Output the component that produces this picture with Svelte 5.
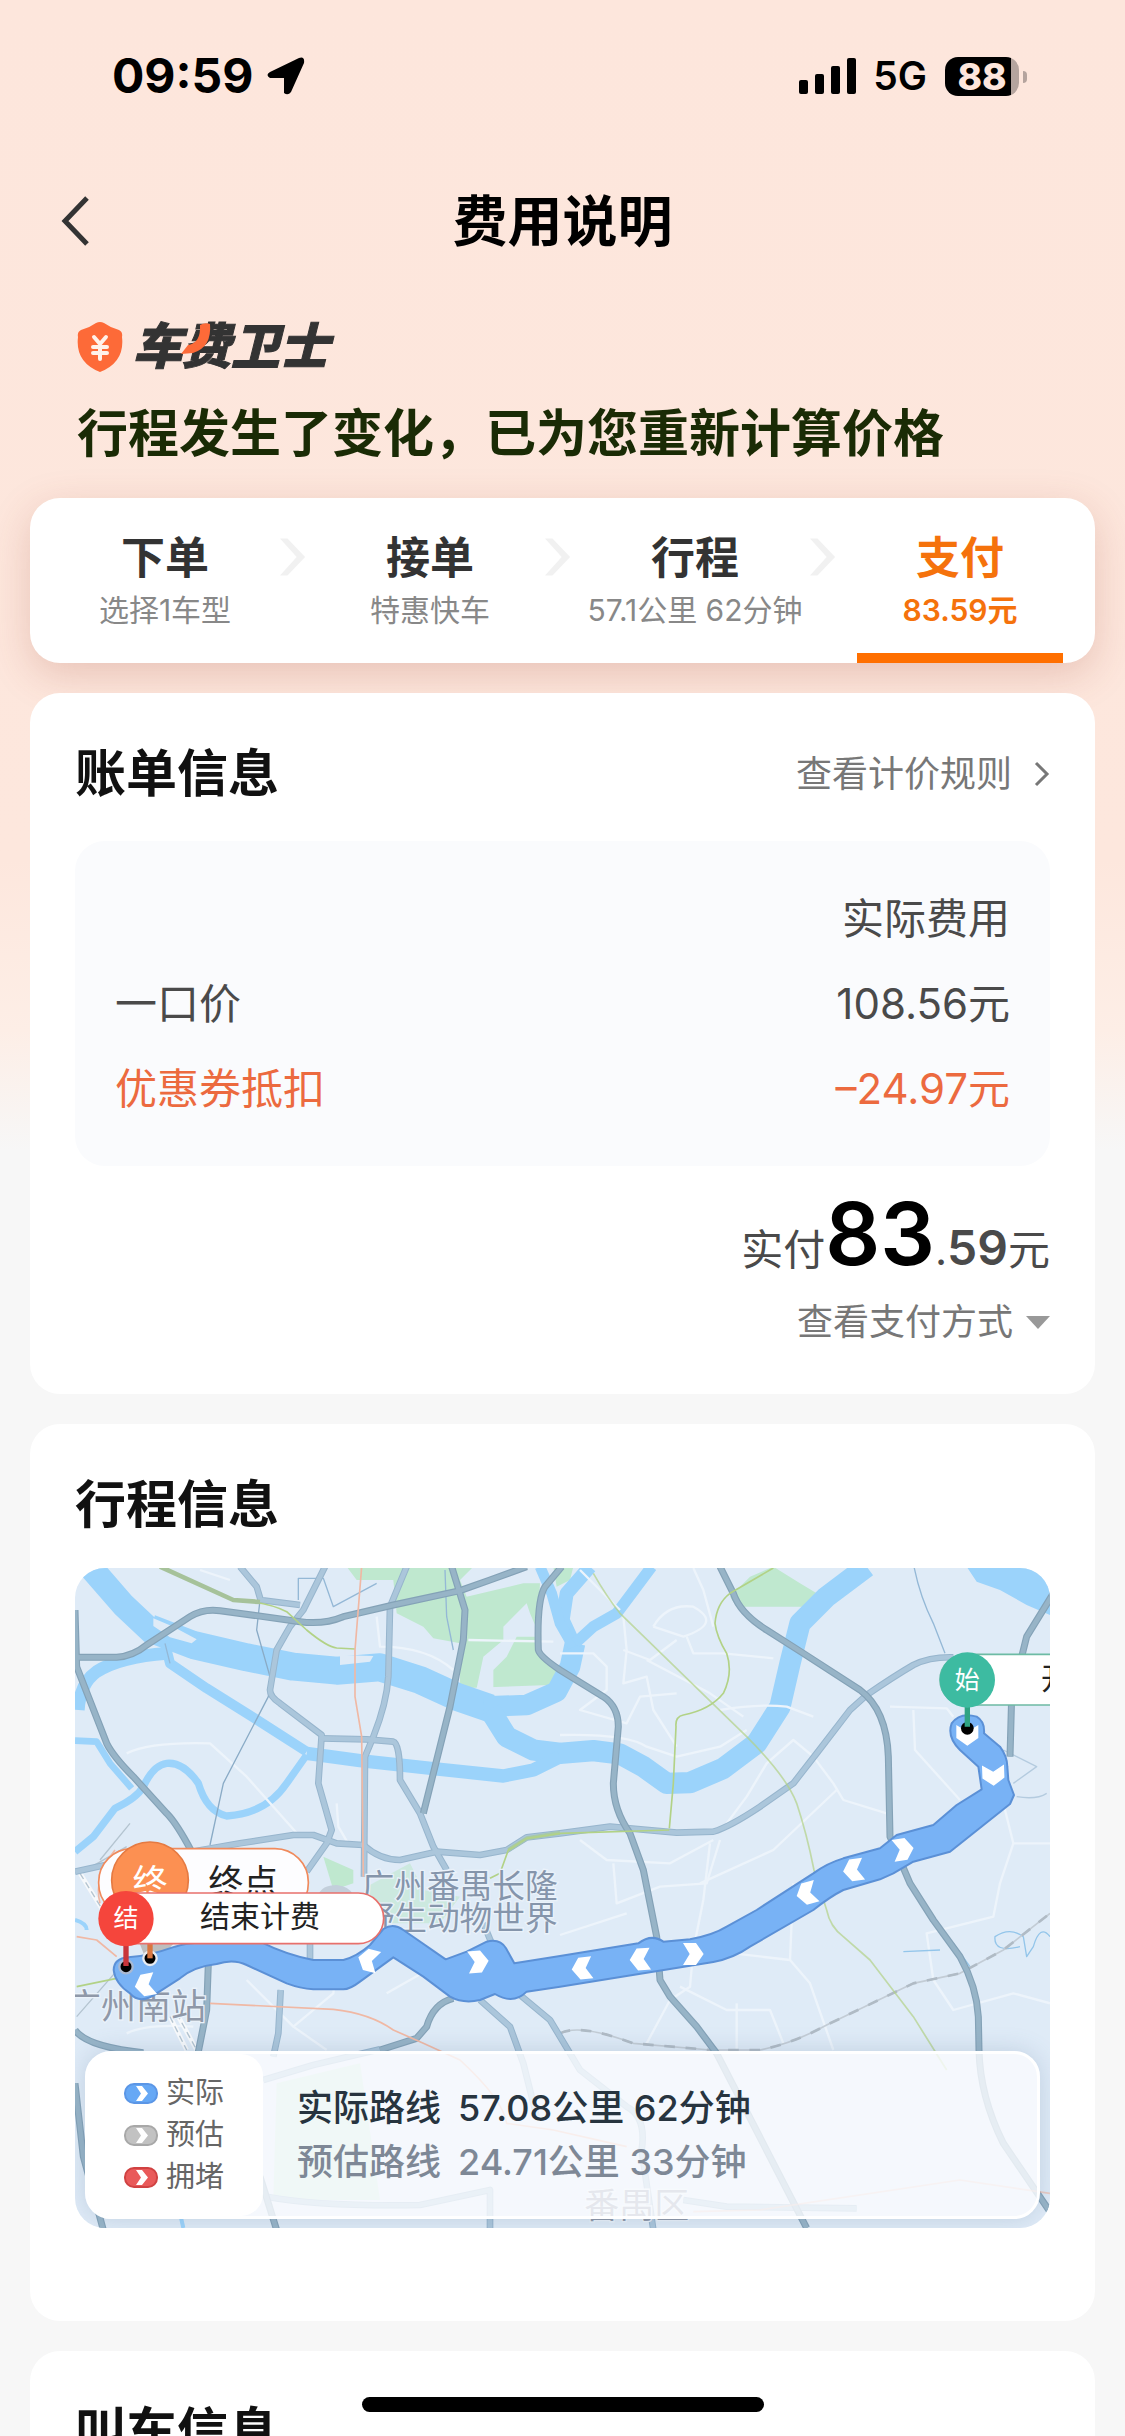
<script>
  const steps = [
    { title: '下单', detail: '选择1车型' },
    { title: '接单', detail: '特惠快车' },
    { title: '行程', detail: '57.1公里 62分钟' },
    { title: '支付', detail: '83.59元', active: true }
  ];

  const bill = [
    { label: '一口价', amount: '108.56元' },
    { label: '优惠券抵扣', amount: '–24.97元', discount: true }
  ];

  const legend = [
    { label: '实际', kind: 'actual' },
    { label: '预估', kind: 'planned' },
    { label: '拥堵', kind: 'jam' }
  ];

  const routes = [
    { name: '实际路线', value: '57.08公里 62分钟', actual: true },
    { name: '预估路线', value: '24.71公里 33分钟' }
  ];

  // Direction marks along the route: x, y, rotation in degrees.
  const marks = [
    [2722, 556, 90], [2800, 676, 88], [2530, 898, -8], [2380, 960, 172], [2240, 1030, 165],
    [1900, 1212, 0], [1740, 1228, 176], [1566, 1255, 174], [1255, 1235, -5], [925, 1230, 195], [255, 1305, 170]
  ];

  const water = [
    ['M90 50L190 165L280 250', 74],
    ['M270 235L400 285L560 322L700 350L830 362L960 352L1080 390L1190 440L1290 475', 84],
    ['M1270 470L1400 465L1490 425L1530 350L1545 280', 62],
    ['M1545 290L1508 210L1520 130L1590 50', 42],
    ['M1440 50L1475 130L1500 220L1540 290', 32],
    ['M1545 280L1600 230L1670 190L1715 130L1775 50', 34],
    ['M1290 480L1340 560L1420 600L1500 610L1600 602L1680 612L1750 650L1820 700L1890 698L1990 655L2090 580L2160 470L2190 340L2220 220L2300 140L2420 50', 64],
    ['M310 260L330 340L440 415L600 515L740 605', 30],
    ['M740 610L900 632L1120 656L1330 678L1420 660L1500 620', 40],
    ['M55 480Q60 400 110 365Q180 320 320 310', 38],
    ['M740 615L680 700Q620 790 500 798Q440 785 415 700Q370 635 320 640Q280 645 250 710Q230 745 165 775L100 860L45 905', 22],
    ['M45 572L110 575L150 640L215 715', 20],
    ['M45 1110Q80 1120 80 1140', 12],
    ['M370 2034L340 1900', 12]
  ];

  const highways = [
    'M45 322L170 322Q220 318 260 285L390 200Q430 175 480 182L720 215Q790 225 850 200L1000 165L1200 122L1290 90L1400 50',
    'M45 180L50 350L140 580Q160 620 220 680L320 790Q350 820 395 905',
    'M1175 50L1215 180L1210 270L1170 470L1090 790',
    'M1505 50L1455 110Q1430 150 1435 300Q1440 320 1500 360L1630 440Q1675 470 1675 530L1660 700Q1660 780 1710 850L1750 960L1790 1160L1800 1290L1830 1340L1910 1430L1970 1510L2240 2034',
    'M1980 50L2020 130Q2040 190 2120 240L2230 310L2400 420Q2480 480 2485 620L2490 860L2550 1000L2620 1110L2700 1220Q2750 1310 2755 1400L2757 1500Q2760 1640 2830 1780L2980 2000',
    'M2980 130L2900 260L2855 440L2850 620',
    'M1180 1345Q1120 1360 1100 1430L1070 1465L960 1500',
    'M45 1440Q80 1490 250 1508',
    'M445 1240L440 1380L410 1530',
    'M45 1600L70 1820L130 2040',
    'M600 1880L650 2040'
  ];

  const avenues = [
    'M540 50L590 110L602 150L720 165',
    'M795 50L730 180L690 230L650 300L630 420Q630 440 660 460L785 555L775 700L815 840L800 880L740 965',
    'M1040 50L990 170L985 380Q980 460 940 560L915 620L912 980',
    'M785 565L920 568L1000 575Q1020 580 1020 690L1080 790L1120 890L1160 960',
    'M395 905L540 880L700 855L760 855L830 880L910 885Q960 930 1020 930L1130 905L1260 915L1340 900L1400 862L1500 850L1650 830L1850 848L1960 845Q2010 830 2100 770L2200 700L2270 610L2370 480L2420 435Q2500 380 2560 345Q2610 320 2680 322',
    'M45 965L160 940',
    'M750 1170L750 1250',
    'M662 1320L655 1450L640 1520',
    'M1380 1335L1470 1410L1560 1560L1700 1670Q1760 1700 1745 1800L1780 2040',
    'M1260 1350L1350 1430L1390 1540L1430 1700',
    'M1270 1120L1295 1180',
    'M610 1590L760 1545L960 1498',
    'M620 1940Q780 1970 1080 1965L1290 1920L1290 2040',
    'M1870 1950L2000 1970L2390 1975'
  ];

  const lanes = [
    'M200 610Q270 575 450 580L560 680L720 860', 'M420 60L510 90', 'M950 200L960 290Q1100 290 1180 360',
    'M830 760L835 830L870 890', 'M1225 270L1480 275', 'M1560 60L1680 180', 'M1900 54L1930 120L1960 230',
    'M1780 230Q1820 160 1900 170Q1990 220 1870 260L1780 230', 'M1690 300L1770 330L1850 270', 'M1500 310L1600 310L1640 350L1640 420L1560 480L1700 520L1740 440L1850 430',
    'M1690 200L1700 300L1690 400L1760 380L1780 480L1850 590', 'M1760 330L1950 430L2050 500', 'M1880 260L1900 310L1990 310L2140 325',
    'M1500 555Q1700 550 1760 590L1850 620L1980 590L2060 540', 'M1980 480Q2100 460 2180 470L2260 500', 'M2490 470L2660 475L2680 500',
    'M2560 480L2565 600L2700 750', 'M2000 820L2060 740L2120 640L2200 570L2260 620L2320 700L2350 750L2480 790', 'M2330 720L2140 900L1920 1000',
    'M1560 870L1640 930L1830 940L1960 870', 'M1660 940L1670 1060L1800 1010L1940 1000L1980 870', 'M1950 880L1930 1050L1900 1200L1890 1310L1830 1350L1760 1480',
    'M1860 1310L2000 1380L2130 1380L2170 1480', 'M2020 1210L2190 1230L2250 1300L2320 1500', 'M2200 1000L2190 1230', 'M2830 760L2860 880L2970 880',
    'M2860 880L2820 1000L2800 1100L2600 1150L2620 1290L2680 1380L2860 1330L2970 1360', 'M2030 1360L2030 1500', 'M1500 1155L1700 1090',
    'M560 1290L700 1430L820 1330L830 1240', 'M700 1430L800 1500', 'M980 1330L1120 1250', 'M200 1450Q260 1420 400 1430'
  ];
</script>

<div class="screen">
  <header class="status">
    <div class="status-side">
      <span class="time">09:59</span>
      <svg class="locate" viewBox="0 0 38 38" aria-hidden="true">
        <path d="M3 15L32 1Q38 -1 37 6L24 35Q21 39 17 36V21H3Q-2 18 3 15Z" />
      </svg>
    </div>
    <div class="status-side">
      <svg class="signal" viewBox="0 0 58 36" aria-hidden="true">
        <rect x="0" y="22" width="9" height="14" rx="2" />
        <rect x="16" y="16" width="9" height="20" rx="2" />
        <rect x="32" y="8" width="9" height="28" rx="2" />
        <rect x="48" y="0" width="9" height="36" rx="2" />
      </svg>
      <span class="network">5G</span>
      <div class="battery"><span class="charge">88</span><i class="nub"></i></div>
    </div>
  </header>

  <nav class="bar">
    <button class="back" aria-label="返回">
      <svg viewBox="0 0 28 50"><path d="M26 2L4 25L26 48" /></svg>
    </button>
    <h1>费用说明</h1>
  </nav>

  <main>
    <section class="hero">
      <div class="brand">
        <svg class="shield" viewBox="0 0 46 50" aria-hidden="true">
          <path fill="#fd6a38" d="M19 1Q23 -1 27 1Q34 6 42 8Q46 10 45 15Q48 40 23 50Q-2 40 1 15Q0 10 4 8Q12 6 19 1Z" />
          <path fill="none" stroke="#fff1ea" stroke-width="4" stroke-linecap="round" d="M17 15L23 22L29 15M23 23V37M16 25H30M16 31H30" />
        </svg>
        <div class="wordmark">
          <span>车费卫士</span>
          <svg class="swoosh" viewBox="0 0 30 34" aria-hidden="true"><path d="M19 3Q24 0 29 2Q31 25 12 31L0 32L7 23Q20 21 19 3Z" /></svg>
        </div>
      </div>
      <p class="headline">行程发生了变化，已为您重新计算价格</p>
    </section>

    <div class="cards">
      <ol class="steps">
        {#each steps as step, i}
          {#if i > 0}
            <li class="next" aria-hidden="true"><svg viewBox="0 0 28 40"><path d="M0 0H8L27 20L8 40H0L18 20Z" /></svg></li>
          {/if}
          <li class="step" class:active={step.active}>
            <strong>{step.title}</strong>
            <span>{step.detail}</span>
            <i></i>
          </li>
        {/each}
      </ol>

      <section class="card bill">
        <div class="heading">
          <h2>账单信息</h2>
          <a href="#rules">查看计价规则<svg viewBox="0 0 16 26" aria-hidden="true"><path d="M2 2L13 13L2 24" /></svg></a>
        </div>
        <table>
          <thead><tr><td></td><th scope="col">实际费用</th></tr></thead>
          <tbody>
            {#each bill as row}
              <tr class:discount={row.discount}><th scope="row">{row.label}</th><td>{row.amount}</td></tr>
            {/each}
          </tbody>
        </table>
        <p class="paid"><span>实付</span><b class="whole">83</b><span class="dot">.</span><b class="cents">59</b><span>元</span></p>
        <button class="method">查看支付方式<svg viewBox="0 0 24 13" aria-hidden="true"><path d="M0 0H24L12 13Z" /></svg></button>
      </section>

      <section class="card trip">
        <div class="heading"><h2>行程信息</h2></div>
        <div class="map">
          <svg class="canvas" viewBox="45 54 2925 1980" preserveAspectRatio="xMidYMid slice" role="img" aria-label="行程地图">
            <rect x="45" y="54" width="2925" height="1980" fill="#dfebf7" />
            <g fill="#bfe8cf">
              <path d="M860 50H1240L1200 90L1220 140L1390 100L1440 100L1430 300L1500 370L1470 405L1200 415V280L1120 265L1090 230L1010 190L1000 90H890Z" />
              <path d="M2070 80L2140 50L2220 100L2270 130L2230 170H2030L2010 140Z" />
              <path d="M1480 50H1540L1530 90L1490 110Z" />
              <path d="M790 920L880 960V1000L820 1020Z" />
              <path opacity=".6" d="M920 1010L1050 940L1090 1020L1200 1040L1140 1120H960Z" />
              <path opacity=".7" d="M650 1600L900 1540L960 1950H640Z" />
            </g>
            <path fill="#dfebf7" d="M1400 160L1330 230V270L1270 320L1250 415H1300V360L1340 320L1370 260H1440L1410 190Z" />
            <g class="line" stroke="#9bd3fb">
              {#each water as [d, width]}<path {d} stroke-width={width} />{/each}
            </g>
            <path fill="#9bd3fb" d="M2720 50L2750 95L2820 120L2900 165L2970 195V50Z" />
            <path fill="#dfebf7" d="M280 205L340 230L410 268L395 280L330 262L280 228ZM840 315L940 318L930 335L840 345Z" />
            <g class="line" stroke="#edf4fb" stroke-width="7">
              {#each lanes as d}<path {d} />{/each}
            </g>
            <g class="line" stroke="#b4c4d0" stroke-width="4">
              <path d="M600 150L590 240L630 380L625 440L490 700L450 885" stroke="#8aabc6" />
              <path d="M1155 60L1160 200L1180 300M715 150V85H790L820 170L950 100M315 280L330 340" stroke="#94b8d6" />
              <path d="M2562 50Q2580 140 2620 220L2655 310" stroke="#94b8d6" />
              <path d="M2830 600L2930 650L2860 700M2870 740Q2930 750 2960 730" stroke="#b4cbdf" />
              <path d="M2530 1205L2640 1200M2680 1180L2730 1250M2880 1190Q2800 1210 2805 1160Q2850 1130 2890 1160L2900 1220L2920 1190Q2940 1120 2970 1160" stroke="#93c5ea" />
              <path d="M1500 1450Q1560 1420 1720 1480L1950 1500L2100 1500Q2200 1480 2300 1425L2560 1300L2700 1270L2830 1200L2970 1090" stroke="#c3ccd5" stroke-width="5" />
              <path d="M1500 1450Q1560 1420 1720 1480L1950 1500L2100 1500Q2200 1480 2300 1425L2560 1300L2700 1270L2830 1200L2970 1090" stroke="#b0bbc5" stroke-width="8" stroke-dasharray="32 32" />
              <path d="M50 1400L190 1240M120 930L210 820M60 970L200 890" />
              <path d="M60 970L190 1180M330 1400L380 1500M350 1390L410 1500" stroke="#f7f9fb" stroke-width="14" />
              <path d="M60 970L190 1180M330 1400L380 1500M350 1390L410 1500" stroke-dasharray="20 12" />
            </g>
            <g class="line">
              {#each avenues as d}<path {d} stroke="#97b5cd" stroke-width="20" />{/each}
              {#each avenues as d}<path {d} stroke="#abc6db" stroke-width="14" />{/each}
              {#each highways as d}<path {d} stroke="#84a2b7" stroke-width="21" />{/each}
              {#each highways as d}<path {d} stroke="#97b4c7" stroke-width="14" />{/each}
            </g>
            <g class="line" stroke="#b2d286" stroke-width="5">
              <path d="M300 50L520 150Q620 155 680 185L740 240Q800 290 830 294L885 297" />
              <path d="M300 50L520 150L600 156" stroke="#a6c29a" stroke-width="14" />
              <path d="M1345 900L1400 865L1500 848" stroke="#a6c8ab" stroke-width="12" />
              <path d="M2140 54L2010 130Q1970 160 1965 220Q1970 260 2000 310Q2020 370 1990 430Q1950 480 1870 495Q1845 500 1848 530L1840 700L1828 835" />
              <path d="M1600 70Q1640 140 1680 190L2060 560Q2180 680 2210 760Q2240 850 2262 960L2300 1080Q2310 1130 2350 1160L2430 1230L2560 1400L2660 1560" opacity=".7" />
              <path d="M1828 840L1500 850L1400 865L1345 900L1320 970L1290 985" />
              <path d="M50 1310L170 1285" />
            </g>
            <g class="line" stroke="#f0b8a4" stroke-width="5">
              <path d="M905 50L885 300L885 440L905 560L910 980" />
              <path d="M450 1360L820 1378Q930 1390 1000 1440L1090 1480L1200 1530Q1330 1650 1340 1720L1480 1740L1700 1790" />
              <path d="M165 900Q100 980 120 1060M50 1160L110 1170L170 1220" />
              <path d="M1900 1985L2100 1980L2700 1890L2970 1930" opacity=".6" />
            </g>
            <path fill="#c3cfdb" d="M775 1035Q785 1005 830 1005Q870 1010 880 1035Z" />
            <g class="place">
              <text x="905" y="1044">广州番禺长隆</text>
              <text x="905" y="1140">野生动物世界</text>
              <text x="18" y="1406" class="station">广州南站</text>
              <text x="1573" y="2004" class="station">番禺区</text>
            </g>

            <path fill="#bdbdbd" d="M235 1170H350L270 1260Z" />
            <path class="route" d="M161 1260Q162 1225 205 1222Q260 1220 345 1190Q420 1168 600 1175Q680 1215 760 1230H850Q890 1220 930 1185L970 1137Q1000 1118 1030 1140L1157 1228L1220 1205L1280 1175Q1320 1165 1338 1195L1363 1240L1500 1218L1735 1180Q1775 1150 1810 1175L1890 1168Q1960 1155 2000 1130L2090 1080L2260 970Q2300 940 2350 925L2460 895L2510 855L2620 825L2690 765L2765 718L2755 650L2700 600Q2660 560 2675 520Q2700 485 2750 500Q2775 515 2772 550L2820 590Q2842 620 2842 650L2845 690L2862 735L2850 762L2670 905L2560 935L2500 970L2460 988L2350 1020Q2310 1040 2260 1080L2070 1190Q2020 1225 1960 1236L1500 1310L1400 1325Q1360 1365 1305 1332L1260 1350Q1210 1362 1170 1340L1090 1280L1000 1222L900 1295Q870 1318 850 1318H760Q720 1315 680 1300L560 1245Q520 1225 470 1242Q400 1250 360 1285L290 1330Q240 1365 210 1330Q165 1300 161 1260Z" />
            {#each marks as [x, y, turn]}
              <path fill="#fff" transform="translate({x} {y}) rotate({turn})" d="M-31 -33H8L31 0L8 33H-31L-11 0Z" />
            {/each}

            <g class="pin">
              <rect x="116" y="896" width="629" height="204" rx="100" fill="#fdfdff" stroke="#f08a5c" />
              <circle cx="270" cy="991" r="115" fill="#fc9052" stroke="#e57a42" />
              <text x="270" y="1034" class="tag big">终</text>
              <text x="445" y="1034" class="name big">终点</text>
              <circle cx="270" cy="1225" r="20" fill="#000" stroke="#e8ecf2" stroke-width="7" />
              <path d="M270 1170V1225" stroke="#d9763f" stroke-width="16" />
            </g>
            <g class="pin">
              <circle cx="198" cy="1250" r="20" fill="#000" stroke="#a9b9d2" stroke-width="7" />
              <path d="M198 1180V1248" stroke="#c9353b" stroke-width="16" />
              <rect x="120" y="1029" width="851" height="152" rx="76" fill="#fff" stroke="#e8706c" />
              <circle cx="198" cy="1106" r="83" fill="#f5453c" />
              <text x="198" y="1132" class="tag">结</text>
              <text x="420" y="1132" class="name">结束计费</text>
            </g>
            <g class="pin">
              <circle cx="2722" cy="535" r="19" fill="#000" />
              <path d="M2722 460V530" stroke="#2fa383" stroke-width="16" />
              <rect x="2640" y="313" width="851" height="152" rx="76" fill="#fff" stroke="#6dbba4" />
              <circle cx="2722" cy="390" r="83" fill="#3dbba1" />
              <text x="2722" y="418" class="tag">始</text>
              <text x="2943" y="418" class="name">开始计费</text>
            </g>
          </svg>

          <div class="summary">
            <ul class="legend">
              {#each legend as item}
                <li>
                  <svg class={item.kind} viewBox="0 0 34 21" aria-hidden="true">
                    <rect x="1" y="1" width="32" height="19" rx="9" />
                    <path d="M12 3H18L24 10.5L18 18H12L17 10.5Z" />
                  </svg>
                  {item.label}
                </li>
              {/each}
            </ul>
            <dl class="routes">
              {#each routes as route}
                <div class:actual={route.actual}><dt>{route.name}</dt><dd>{route.value}</dd></div>
              {/each}
            </dl>
          </div>
        </div>
      </section>

      <section class="card">
        <div class="heading"><h2>叫车信息</h2></div>
      </section>
    </div>
  </main>
  <div class="home"></div>
</div>

<style>
  :global(body) {
    margin: 0;
    background: #f7f7f7;
  }
  .screen {
    height: 100vh;
    overflow: hidden;
    position: relative;
    background: linear-gradient(#fde6dc 0, #fde7dd 860px, #fdeee6 1030px, #f7f7f7 1150px);
    font-family: Inter, 'Noto Sans CJK SC', sans-serif;
    color: #4a4a4a;
  }
  h1, h2, p, ol, ul, dl, dd { margin: 0; padding: 0; }
  ol, ul { list-style: none; }
  button { border: 0; padding: 0; background: none; font: inherit; color: inherit; }
  svg { display: block; flex: none; }

  .status {
    height: 152px;
    padding: 0 98px 0 112px;
    display: flex;
    align-items: center;
    justify-content: space-between;
    color: #000;
  }
  .status-side { display: flex; align-items: center; }
  .time { font-size: 48px; font-weight: 700; line-height: 60px; }
  .locate { width: 38px; height: 38px; margin-left: 14px; }
  .signal { width: 58px; height: 36px; }
  .network { margin-left: 16px; font-size: 39px; font-weight: 600; line-height: 48px; }
  .battery {
    position: relative;
    width: 74px;
    height: 39px;
    margin: 0 8px 0 18px;
    border-radius: 13px;
    background: linear-gradient(90deg, #000 66px, #b5a49e 66px);
    display: flex;
    align-items: center;
    justify-content: center;
  }
  .charge { color: #fde6dc; font-size: 37px; font-weight: 800; line-height: 39px; }
  .nub {
    position: absolute;
    right: -8px;
    top: 14px;
    width: 4px;
    height: 12px;
    border-radius: 0 4px 4px 0;
    background: #b5a49e;
  }

  .bar {
    height: 138px;
    padding: 0 61px;
    display: grid;
    grid-template-columns: 1fr auto 1fr;
    align-items: center;
  }
  .back { width: 28px; height: 50px; }
  .back svg { width: 28px; height: 50px; fill: none; stroke: #333; stroke-width: 5; }
  h1 { font-size: 55px; font-weight: 600; line-height: 72px; color: #000; }

  .hero { padding: 32px 77px 28px; }
  .brand { display: flex; align-items: center; gap: 10px; height: 50px; }
  .shield { width: 46px; height: 50px; }
  .wordmark {
    position: relative;
    font-size: 49px;
    font-weight: 900;
    font-style: italic;
    line-height: 50px;
    color: #333;
    -webkit-text-stroke: 1px #333;
  }
  .swoosh { position: absolute; left: 47px; top: 0; width: 32px; height: 34px; fill: #fd6a38; }
  .headline { margin-top: 26px; font-size: 51px; font-weight: 700; line-height: 72px; color: #1a2b05; }

  .cards { padding: 0 30px; display: flex; flex-direction: column; gap: 30px; }
  .steps {
    display: flex;
    padding: 30px 32px 0;
    border-radius: 30px;
    background: #fff;
    box-shadow: 0 12px 40px rgba(160, 70, 50, 0.22);
  }
  .step { width: 206px; display: flex; flex-direction: column; align-items: center; }
  .step strong { font-size: 44px; font-weight: 600; line-height: 60px; color: #333; }
  .step span { font-size: 30px; line-height: 44px; color: #888; white-space: nowrap; }
  .step i { width: 100%; height: 10px; margin-top: 21px; }
  .step.active strong, .step.active span { color: #f5720c; }
  .step.active span { font-weight: 600; }
  .step.active i { background: #ff6f00; }
  .next { flex: 1; display: flex; padding: 9px 0 0 12px; }
  .next svg { width: 26px; height: 40px; fill: #f1f1f1; }

  .card { padding: 45px 45px 0; border-radius: 30px; background: #fff; position: relative; }
  .heading { display: flex; justify-content: space-between; align-items: center; }
  h2 { font-size: 51px; font-weight: 700; line-height: 72px; color: #111; }
  .heading a {
    display: flex;
    align-items: center;
    gap: 22px;
    font-size: 36px;
    line-height: 52px;
    color: #777;
    text-decoration: none;
  }
  .heading a svg { width: 16px; height: 26px; fill: none; stroke: #777; stroke-width: 3; }

  .bill { padding-bottom: 46px; display: flex; flex-direction: column; }
  table {
    width: 100%;
    margin-top: 31px;
    padding: 35px 40px;
    border-radius: 30px;
    border-spacing: 0;
    background: #fafbfd;
    font-size: 42px;
    line-height: 60px;
  }
  tr { height: 85px; }
  th, td { padding: 0; font-weight: 400; text-align: right; }
  tbody th { text-align: left; }
  .discount { color: #ec6a3f; }
  .paid {
    margin-top: 18px;
    display: flex;
    justify-content: flex-end;
    align-items: baseline;
    font-size: 42px;
    line-height: 60px;
  }
  .whole { font-size: 86px; font-weight: 600; line-height: 100px; color: #000; }
  .cents { font-size: 48px; font-weight: 600; }
  .method {
    align-self: flex-end;
    margin-top: 12px;
    display: flex;
    align-items: center;
    gap: 13px;
    font-size: 36px;
    line-height: 52px;
    color: #777;
  }
  .method svg { width: 24px; height: 13px; fill: #999; }

  .trip { padding-bottom: 93px; }
  .map {
    position: relative;
    margin-top: 27px;
    aspect-ratio: 975 / 660;
    border-radius: 30px;
    overflow: hidden;
  }
  .canvas { width: 100%; height: 100%; }
  .line { fill: none; stroke-linejoin: round; }
  .route { fill: #78b2f5; stroke: #5b90d6; stroke-width: 6; stroke-linejoin: round; }
  .place text { font-size: 98px; fill: #8595ab; stroke: #eaf2fa; stroke-width: 8px; paint-order: stroke; }
  .place .station { font-size: 105px; fill: #8f98a8; }
  .pin { stroke-width: 5; }
  .pin text { stroke: none; font-size: 90px; }
  .pin .name { fill: #222; }
  .pin .tag { font-size: 75px; text-anchor: middle; fill: #fff; }
  .pin .big { font-size: 105px; }

  .summary {
    position: absolute;
    left: 10px;
    right: 10px;
    bottom: 9px;
    display: flex;
    box-sizing: border-box;
    height: 168px;
    border: 3px solid #fff;
    border-radius: 26px;
    background: rgba(250, 251, 254, 0.8);
    box-shadow: 0 0 24px rgba(80, 110, 150, 0.22);
  }
  .legend {
    width: 175px;
    box-sizing: border-box;
    padding: 18px 0 0 36px;
    border-radius: 22px;
    background: #fff;
    font-size: 29px;
    line-height: 42px;
    color: #666;
  }
  .legend li { display: flex; align-items: center; gap: 8px; }
  .legend svg { width: 34px; height: 21px; }
  .legend rect { stroke-width: 2; }
  .legend path { fill: #fff; }
  .actual rect { fill: #66a8f5; stroke: #5b96e6; }
  .planned rect { fill: #c2c2c2; stroke: #a8a8a8; }
  .jam rect { fill: #e95a5a; stroke: #d04242; }
  .routes {
    padding-left: 34px;
    display: flex;
    flex-direction: column;
    justify-content: center;
    font-size: 36px;
    font-weight: 500;
    line-height: 54px;
    color: #7e8896;
  }
  .routes div { display: flex; gap: 17px; }
  .routes .actual { color: #27343f; }

  .home {
    position: absolute;
    left: 50%;
    bottom: 24px;
    width: 402px;
    height: 15px;
    border-radius: 8px;
    background: #000;
    transform: translateX(-50%);
  }
</style>
